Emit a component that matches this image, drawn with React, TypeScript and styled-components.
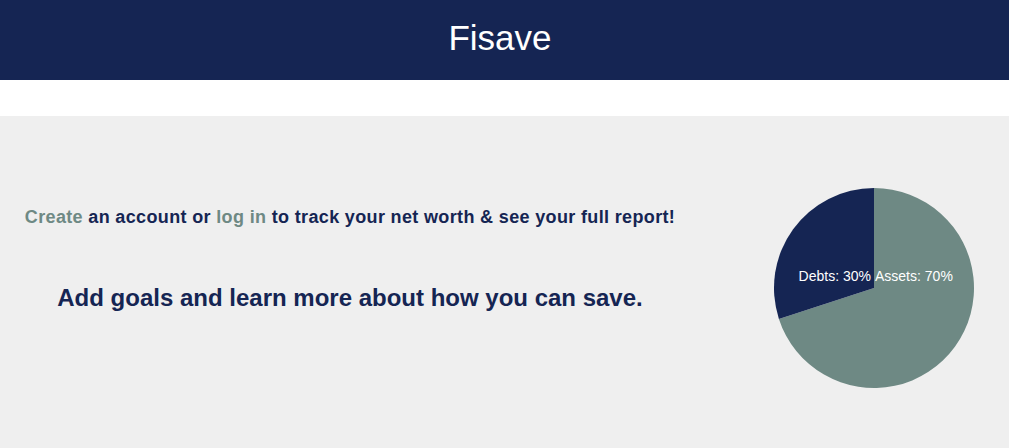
import React from "react";
import styled, { createGlobalStyle } from "styled-components";

const GlobalStyle = createGlobalStyle`
  html, body { margin: 0; padding: 0; background: #ffffff; }
  body { font-family: "Liberation Sans", Arial, sans-serif; }
`;

const NAVY = "#152553";
const SAGE = "#6e8984";

const Header = styled.header`
  height: 80px;
  background: ${NAVY};
  display: flex;
  align-items: center;
  justify-content: center;
  padding-right: 9px;
`;

const Title = styled.h1`
  margin: 0;
  color: #ffffff;
  font-weight: 400;
  font-size: 35px;
  line-height: 1;
  padding-bottom: 5px;
`;

const Spacer = styled.div`
  height: 36px;
  background: #ffffff;
`;

const Main = styled.main`
  background: #efefef;
  min-height: 332px;
  box-sizing: border-box;
  padding-top: 71px;
  display: flex;
  align-items: flex-start;
`;

const Intro = styled.section`
  width: 700px;
  display: flex;
  flex-direction: column;
  align-items: center;
  padding-top: 20px;
`;

const Lead = styled.p`
  margin: 0;
  color: ${NAVY};
  font-weight: 700;
  font-size: 18px;
  line-height: 20px;
  letter-spacing: 0.35px;
  white-space: nowrap;
`;

const LinkText = styled.a`
  color: ${SAGE};
  text-decoration: none;
  cursor: pointer;
`;

const Pitch = styled.h2`
  margin: 57px 0 0;
  color: ${NAVY};
  font-weight: 700;
  font-size: 24px;
  line-height: 28px;
  white-space: nowrap;
`;

const ChartBox = styled.div`
  margin-left: 73px;
  width: 202px;
  height: 202px;
`;

const PieChart: React.FC<{ debts: number }> = ({ debts }) => {
  const cx = 101;
  const cy = 101;
  const r = 100;
  const ang = (debts / 100) * 2 * Math.PI;
  const ex = cx - r * Math.sin(ang);
  const ey = cy - r * Math.cos(ang);
  const large = debts > 50 ? 1 : 0;
  const largeA = debts > 50 ? 0 : 1;
  return (
    <svg width="202" height="202" viewBox="0 0 202 202">
      <path
        d={`M${cx},${cy} L${cx},${cy - r} A${r},${r} 0 ${largeA} 1 ${ex},${ey} Z`}
        fill={SAGE}
      />
      <path
        d={`M${cx},${cy} L${cx},${cy - r} A${r},${r} 0 ${large} 0 ${ex},${ey} Z`}
        fill={NAVY}
      />
      <text
        x={cx - 3}
        y={cy - 7}
        fill="#ffffff"
        fontSize="14"
        textAnchor="end"
        fontFamily="'Liberation Sans', Arial, sans-serif"
      >
        Debts: {debts}%
      </text>
      <text
        x={cx + 1}
        y={cy - 7}
        fill="#ffffff"
        fontSize="14"
        textAnchor="start"
        fontFamily="'Liberation Sans', Arial, sans-serif"
      >
        Assets: {100 - debts}%
      </text>
    </svg>
  );
};

export default function App() {
  return (
    <>
      <GlobalStyle />
      <Header>
        <Title>Fisave</Title>
      </Header>
      <Spacer />
      <Main>
        <Intro>
          <Lead>
            <LinkText>Create</LinkText> an account or <LinkText>log in</LinkText> to track
            your net worth &amp; see your full report!
          </Lead>
          <Pitch>Add goals and learn more about how you can save.</Pitch>
        </Intro>
        <ChartBox>
          <PieChart debts={30} />
        </ChartBox>
      </Main>
    </>
  );
}
